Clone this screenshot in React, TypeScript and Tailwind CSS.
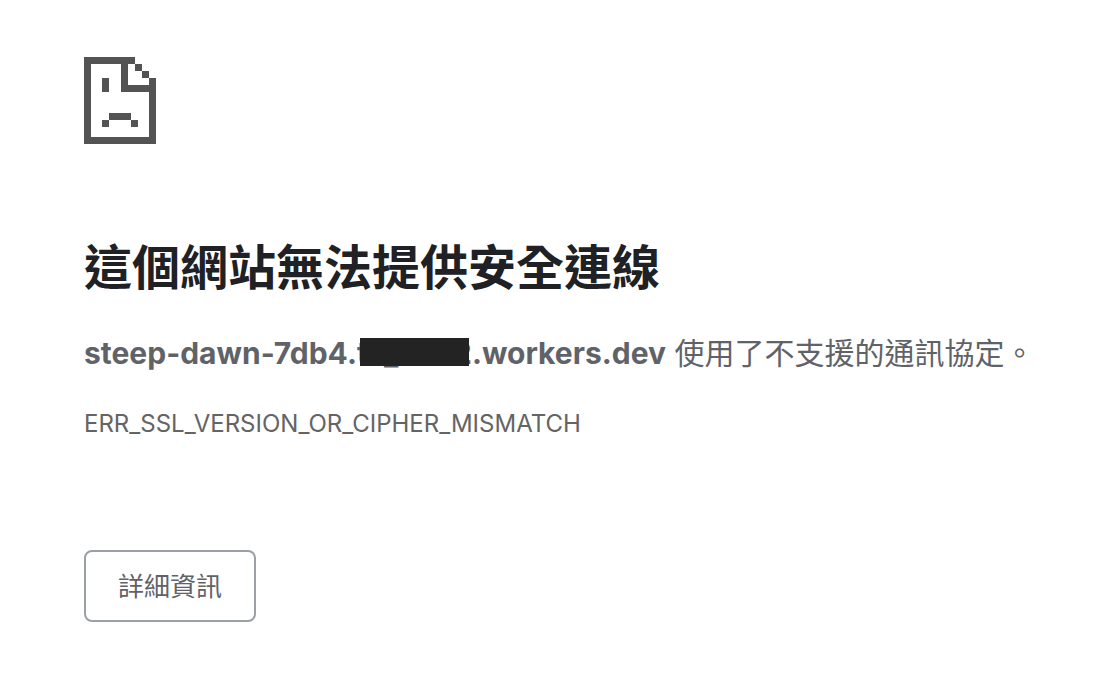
function SadPageIcon() {
  return (
    <svg
      width="72"
      height="87"
      viewBox="0 0 72 87"
      fill="#535353"
      shapeRendering="crispEdges"
      aria-hidden="true"
    >
      <path d="M0 0H51V7H44V28H65V21H72V87H0ZM7 7V80H65V35H37V7Z" fillRule="evenodd" />
      <path d="M51 7H58V14H51ZM58 14H65V21H58Z" />
      <path d="M18 21H25V35H18Z" />
      <path d="M25 56H47V63H25ZM18 63H25V70H18ZM47 63H54V70H47Z" />
    </svg>
  );
}

function RedactedName() {
  return (
    <span className="relative inline-flex w-[115px]">
      <span>t</span>
      <span className="ml-4 flex-1">_</span>
      <span>2</span>
      <span className="absolute top-[3px] right-[3px] left-[3px] h-7 bg-[#232323]" />
    </span>
  );
}

export default function App() {
  return (
    <main
      lang="zh-Hant"
      className="min-h-screen bg-white px-[84px] pt-[57px] pb-16 font-['Inter','Noto_Sans_CJK_TC',sans-serif] text-[#5f6368]"
    >
      <SadPageIcon />
      <h1 className="mt-24 text-[48px] leading-[56px] font-bold text-[#202124]">
        這個網站無法提供安全連線
      </h1>
      <p className="mt-[39px] text-[30px] leading-[36px] whitespace-nowrap">
        <strong className="font-bold">
          steep-dawn-7db4.
          <RedactedName />
          .workers.dev
        </strong>{" "}
        使用了不支援的通訊協定。
      </p>
      <p className="mt-[37px] text-[24px] leading-[32px] text-[#646464]">
        ERR_SSL_VERSION_OR_CIPHER_MISMATCH
      </p>
      <button
        type="button"
        className="mt-[110px] rounded-lg border-2 border-[#9aa0a6] px-8 pt-[17px] pb-[15px] text-[26px] leading-[36px]"
      >
        詳細資訊
      </button>
    </main>
  );
}
